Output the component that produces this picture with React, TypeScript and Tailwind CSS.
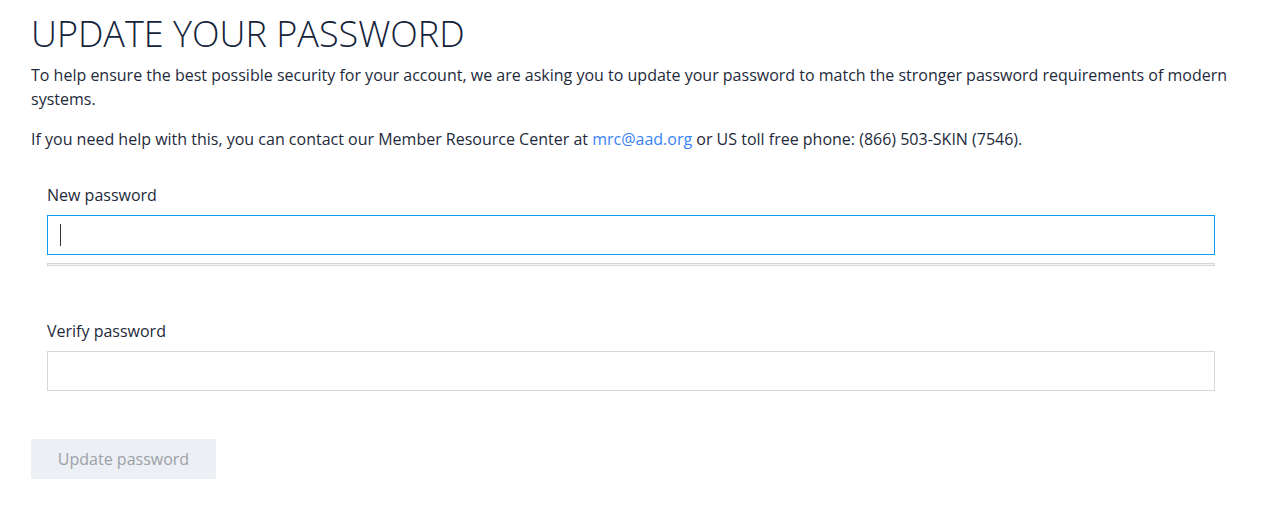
export default function App() {
  return (
    <div
      className="min-h-[507px] bg-white px-[31px] pt-[12px] text-[#1e2a3b]"
      style={{ fontFamily: '"Open Sans", "Liberation Sans", sans-serif' }}
    >
      <h1 className="text-[36px] font-light leading-[44px] tracking-normal text-[#14233a]">
        UPDATE YOUR PASSWORD
      </h1>
      <p className="mt-[7px] text-[16px] leading-[24px]">
        To help ensure the best possible security for your account, we are asking you to update your
        password to match the stronger password requirements of modern systems.
      </p>
      <p className="mt-[16px] text-[16px] leading-[24px]">
        If you need help with this, you can contact our Member Resource Center at{' '}
        <a href="#" className="text-[#3b82f6]">
          mrc@aad.org
        </a>{' '}
        or US toll free phone: (866) 503-SKIN (7546).
      </p>

      <form className="mt-[32px] pl-[16px] pr-[24px]" onSubmit={(e) => e.preventDefault()}>
        <label className="block text-[16px] leading-[24px]">New password</label>
        <div className="relative mt-[8px]">
          <input
            type="password"
            autoFocus
            className="block h-[40px] w-full border border-[#0a9df0] px-[12px] outline-none"
          />
          {/* caret as captured */}
          <span className="pointer-events-none absolute left-[13px] top-[9px] h-[22px] w-[1px] bg-[#333]" />
        </div>
        <div className="mt-[8px] h-[3px] w-full border border-[#d6d6d6] bg-[#f4f4f4]" />

        <label className="mt-[53px] block text-[16px] leading-[24px]">Verify password</label>
        <input
          type="password"
          className="mt-[8px] block h-[40px] w-full border border-[#d5d9de] px-[12px] outline-none"
        />
      </form>

      <button
        type="button"
        disabled
        className="mt-[48px] h-[40px] w-[185px] rounded-[2px] bg-[#eceff3] text-[16px] text-[#9ba1a8]"
      >
        Update password
      </button>
    </div>
  )
}
